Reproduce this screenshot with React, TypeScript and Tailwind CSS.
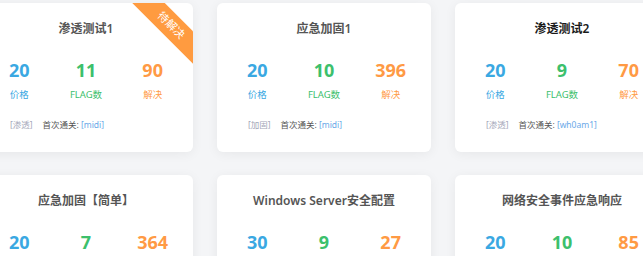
import React from 'react'

type Challenge = {
  title: string
  price: number
  flags: number
  solved: number
  tag?: string
  firstBlood?: string
  pending?: boolean
  dark?: boolean
}

const challenges: Challenge[] = [
  { title: '渗透测试1', price: 20, flags: 11, solved: 90, tag: '渗透', firstBlood: 'midi', pending: true },
  { title: '应急加固1', price: 20, flags: 10, solved: 396, tag: '加固', firstBlood: 'midi' },
  { title: '渗透测试2', price: 20, flags: 9, solved: 70, tag: '渗透', firstBlood: 'wh0am1', dark: true },
  { title: '应急加固【简单】', price: 20, flags: 7, solved: 364 },
  { title: 'Windows Server安全配置', price: 30, flags: 9, solved: 27 },
  { title: '网络安全事件应急响应', price: 20, flags: 10, solved: 85 },
]

function ChallengeCard({ c }: { c: Challenge }) {
  return (
    <div className="relative h-[149px] overflow-hidden rounded-md bg-white shadow-[0_2px_12px_rgba(0,0,0,0.06)]">
      {/* pending ribbon */}
      {c.pending && (
        <div className="absolute right-[-28px] top-[11px] flex h-[23px] w-[100px] rotate-45 items-center justify-center bg-[#ff9b40] text-[11px] text-white">
          待解决
        </div>
      )}

      <div
        className={
          'pt-[18px] text-center text-[12px] font-semibold leading-[16px] ' +
          (c.dark ? 'text-[#1a1a1a]' : 'text-[#555]')
        }
      >
        {c.title}
      </div>

      <div className="mt-[22px] grid grid-cols-3 px-[7px] text-center">
        <div className="text-[#3aa8e2]">
          <div className="text-[18px] font-bold leading-[22px]">{c.price}</div>
          <div className="mt-[8px] text-[9.5px] leading-[12px]">价格</div>
        </div>
        <div className="text-[#3cc06c]">
          <div className="text-[18px] font-bold leading-[22px]">{c.flags}</div>
          <div className="mt-[8px] text-[9.5px] leading-[12px]">FLAG数</div>
        </div>
        <div className="text-[#ff9a44]">
          <div className="text-[18px] font-bold leading-[22px]">{c.solved}</div>
          <div className="mt-[8px] text-[9.5px] leading-[12px]">解决</div>
        </div>
      </div>

      {c.tag && (
        <div className="mt-[18px] flex items-center pl-[31px] text-[8.5px] leading-[12px]">
          <span className="text-[#a3a6b8]">[{c.tag}]</span>
          <span className="ml-[10px] text-[#555]">首次通关:</span>
          <span className="ml-[2px] text-[#6aa8e8]">[{c.firstBlood}]</span>
        </div>
      )}
    </div>
  )
}

export default function App() {
  return (
    <div
      className="h-[256px] w-[643px] overflow-hidden bg-[#f4f5f7]"
      style={{ fontFamily: '"Noto Sans", "Noto Sans CJK SC", sans-serif' }}
    >
      <div className="-ml-[21px] grid w-[690px] grid-cols-[214px_214px_214px] gap-x-[24px] gap-y-[23px] pt-[3px]">
        {challenges.map((c, idx) => (
          <ChallengeCard key={idx} c={c} />
        ))}
      </div>
    </div>
  )
}
